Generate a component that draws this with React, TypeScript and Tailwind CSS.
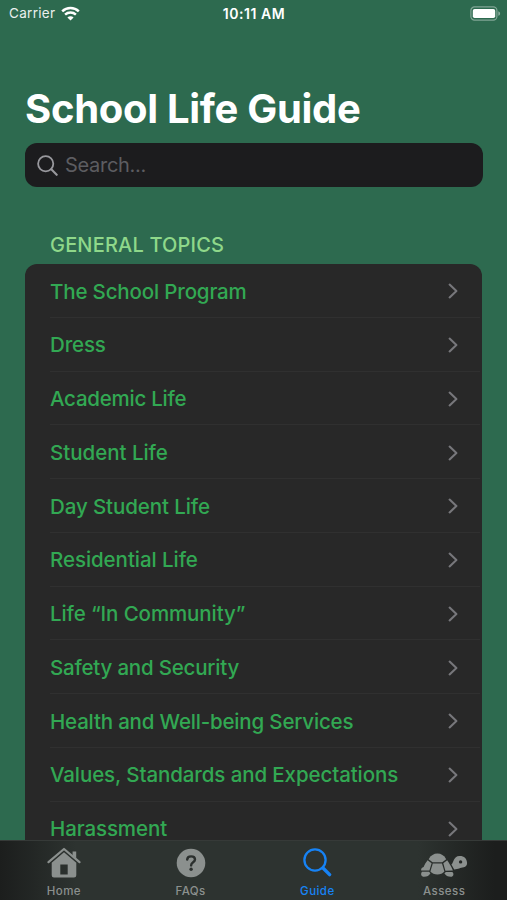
import type { ReactNode } from "react";

interface TabItemProps {
  label: string;
  icon: ReactNode;
  active?: boolean;
}

const topics = [
  { name: "The School Program", tracking: "tracking-[-0.16px]" },
  { name: "Dress", tracking: "tracking-[-0.15px]" },
  { name: "Academic Life", tracking: "tracking-[-0.25px]" },
  { name: "Student Life", tracking: "tracking-[-0.02px]" },
  { name: "Day Student Life", tracking: "tracking-[-0.1px]" },
  { name: "Residential Life", tracking: "tracking-[-0.06px]" },
  { name: "Life “In Community”", tracking: "tracking-[-0.1px]" },
  { name: "Safety and Security", tracking: "tracking-[-0.2px]" },
  { name: "Health and Well-being Services", tracking: "tracking-[-0.18px]" },
  { name: "Values, Standards and Expectations", tracking: "tracking-[-0.1px]" },
  { name: "Harassment", tracking: "tracking-[-0.1px]" },
];

function WifiIcon() {
  return (
    <svg width="19" height="15" viewBox="0 0 19 15" fill="none" stroke="#fff" strokeWidth="2.5">
      <path d="M1.2 5.3C5.8 0.9 13.2 0.9 17.8 5.3" />
      <path d="M4.1 8.6C7.1 5.8 11.9 5.8 14.9 8.6" />
      <path d="M9.5 14.4L6.4 11.4C8.1 9.8 10.9 9.8 12.6 11.4Z" fill="#fff" stroke="none" />
    </svg>
  );
}

function BatteryIcon() {
  return (
    <svg width="31" height="15" viewBox="0 0 31 15">
      <rect x="0.9" y="0.9" width="26" height="13.2" rx="3.6" fill="none" stroke="#fff" strokeOpacity="0.4" strokeWidth="1.2" />
      <rect x="2.8" y="2.9" width="22.4" height="9.2" rx="1.8" fill="#fff" />
      <path d="M28.3 5.2C30.7 6 30.7 9 28.3 9.8Z" fill="#fff" fillOpacity="0.45" />
    </svg>
  );
}

function SearchIcon() {
  return (
    <svg width="21" height="21" viewBox="0 0 21 21" fill="none" stroke="#98989d" strokeWidth="1.8" strokeLinecap="round">
      <circle cx="8.7" cy="8.7" r="7.6" />
      <path d="M14.3 14.3L19.7 19.8" strokeWidth="2.1" />
    </svg>
  );
}

function Chevron() {
  return (
    <svg width="10" height="16" viewBox="0 0 10 16" fill="none" stroke="#77777b" strokeWidth="2.1" strokeLinecap="round" strokeLinejoin="round">
      <path d="M1.6 1.6L8.4 8L1.6 14.4" />
    </svg>
  );
}

function HomeIcon() {
  return (
    <svg width="34" height="32" viewBox="0 0 34 32">
      <path d="M1.5 15.2L17 2L32.5 15.2" fill="none" stroke="#8b908e" strokeWidth="2.2" strokeLinecap="round" strokeLinejoin="round" />
      <path d="M25.6 4.6H29.2V11.6L25.6 8.4Z" fill="#8b908e" />
      <path fillRule="evenodd" d="M17 5.2L29.3 15.7V28.3Q29.3 30.6 27 30.6H7Q4.7 30.6 4.7 28.3V15.7ZM13.3 17.6V27.6H20.7V17.6Z" fill="#8b908e" />
    </svg>
  );
}

function FaqIcon() {
  return (
    <svg width="30" height="30" viewBox="0 0 30 30">
      <circle cx="15" cy="15" r="14.3" fill="#8b908e" />
      <path d="M11.2 11.6C11.3 9.5 12.8 8.4 15.1 8.4C17.4 8.4 19 9.7 19 11.6C19 14.4 15.1 14.3 15.1 17.4" fill="none" stroke="#2b302e" strokeWidth="2.4" strokeLinecap="round" />
      <circle cx="15.1" cy="21.3" r="1.7" fill="#2b302e" />
    </svg>
  );
}

function GuideIcon() {
  return (
    <svg width="29" height="29" viewBox="0 0 29 29" fill="none" stroke="#1783f5">
      <circle cx="12" cy="12" r="10.6" strokeWidth="2.3" />
      <path d="M20 20L26.6 26.6" strokeWidth="3.4" strokeLinecap="round" />
    </svg>
  );
}

function TurtleIcon() {
  return (
    <svg width="48" height="30" viewBox="0 -4 48 30" fill="#8b908e">
      {/* shell */}
      <path d="M8.6 7.2C10.8 3.4 13.8 1.6 17.4 1.6C21 1.6 24.1 3.4 26.2 7.2L22.2 10.2H12.6Z" />
      <path d="M12.8 11.4H22L24.4 19.5C22.7 21.6 20.4 22.5 17.4 22.5C14.4 22.5 12.1 21.6 10.4 19.5Z" />
      <path d="M7.6 8.2L11.6 11.2L9.4 18.6L1.2 18.4C0.8 16.4 2.1 15.6 3.6 15C4.6 12.6 5.8 10.4 7.6 8.2Z" />
      <path d="M27.2 8.2C29.2 11 31.2 14.4 32.9 18.4L25.4 18.8L23.3 11.2Z" />
      {/* feet */}
      <path d="M2 19.7H9L10.4 21.3C9.2 23.8 7.1 24.8 4.2 24.8C0.9 24.8 0.4 21.7 2 19.7Z" />
      <path d="M25.9 19.9H32.4C34.2 21.6 33.5 24.8 30.8 24.8C27.9 24.8 25.6 23.8 24.4 21.3Z" />
      {/* neck and head */}
      <path fillRule="evenodd" d="M31.4 12.4C33.8 11.4 33.1 4.2 39.5 4.1C44.2 4 46.7 6.7 47.1 10.9C47.2 13 45.8 14.8 43.8 15.2C40 15.7 38.6 17.2 34.2 17.4ZM40.6 8.2A1.7 1.7 0 1 0 40.6 11.6A1.7 1.7 0 1 0 40.6 8.2Z" />
    </svg>
  );
}

function TabItem({ label, icon, active = false }: TabItemProps) {
  return (
    <div className="flex flex-col items-center pl-px">
      <div className="flex h-[43px] items-center justify-center">{icon}</div>
      <span className={`text-[11.5px] leading-[15px] font-medium tracking-[0.45px] ${active ? "text-[#1783f5]" : "text-[#8b908e]"}`}>
        {label}
      </span>
    </div>
  );
}

export default function App() {
  return (
    <div className="flex h-[900px] w-[507px] flex-col overflow-hidden bg-[#2d6a4f] font-['Inter','Liberation_Sans',sans-serif]">
      <header className="grid h-[27px] grid-cols-3 items-center pr-[6px] pl-[9px] text-[13.5px] leading-[27px] text-white">
        <div className="flex items-center gap-[6px]">
          <span className="tracking-[0.3px] opacity-90">Carrier</span>
          <WifiIcon />
        </div>
        <span className="pr-[2px] text-center text-[14px] font-semibold tracking-[0.55px]">10:11 AM</span>
        <div className="flex justify-end">
          <BatteryIcon />
        </div>
      </header>

      <main className="flex min-h-0 flex-1 flex-col overflow-hidden px-[25px]">
        <h1 className="mt-[57px] text-[40px] leading-[50px] font-bold tracking-[-0.3px] text-white">School Life Guide</h1>

        <div className="mt-[9px] flex h-[44px] w-[458px] shrink-0 items-center gap-[7px] rounded-[12px] bg-[#1c1c1e] pl-3">
          <SearchIcon />
          <span className="text-[20px] tracking-[-0.3px] text-[#5d5d61]">Search...</span>
        </div>

        <h2 className="mt-[45px] pl-[25px] text-[20px] leading-[26px] font-medium tracking-[0.18px] text-[#8fd88a]">GENERAL TOPICS</h2>

        <ul className="mt-[6px] w-[457px] rounded-t-[12px] bg-[#282828]">
          {topics.map((topic) => (
            <li key={topic.name} className="pr-[2px] pl-[25px]">
              <div className="flex h-[53.75px] items-center justify-between border-b border-[#303030] pt-[2px] pr-[22px]">
                <span className={`pt-px text-[20.5px] font-medium whitespace-nowrap text-[#32a853] ${topic.tracking}`}>{topic.name}</span>
                <Chevron />
              </div>
            </li>
          ))}
        </ul>
      </main>

      <nav className="grid h-[60px] shrink-0 grid-cols-4 border-t border-[#363a38] bg-linear-to-r from-[#1c1e1d] from-0% via-[#2d3330] via-15% to-[#2d3330] to-100%">
        <TabItem label="Home" icon={<HomeIcon />} />
        <TabItem label="FAQs" icon={<FaqIcon />} />
        <TabItem label="Guide" icon={<GuideIcon />} active />
        <div className="bg-linear-to-r from-[#2d3330] from-30% to-[#1c1e1d] to-90%">
          <TabItem label="Assess" icon={<TurtleIcon />} />
        </div>
      </nav>
    </div>
  );
}
